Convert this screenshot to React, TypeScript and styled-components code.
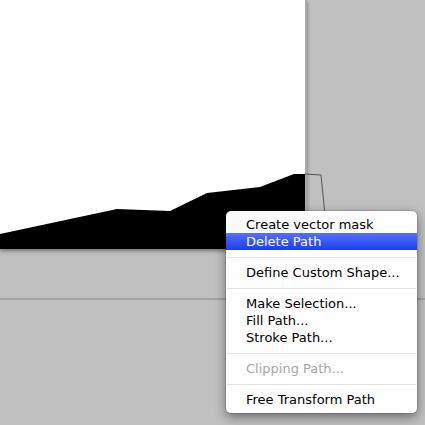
import React from "react";
import styled, { createGlobalStyle } from "styled-components";

const GlobalStyle = createGlobalStyle`
  html, body {
    margin: 0;
    padding: 0;
    background: #c0c0c0;
  }
`;

const Workspace = styled.div`
  position: relative;
  width: 425px;
  height: 425px;
  overflow: hidden;
  background: #c0c0c0;
  display: flex;
  flex-direction: column;
`;

const Canvas = styled.div`
  width: 305px;
  height: 249px;
  background: #ffffff;
  border-right: 2px solid #a8a8a8;
  box-shadow: 0 2px 4px rgba(0, 0, 0, 0.4);
  position: relative;

  svg {
    display: block;
    overflow: visible;
  }
`;

const Divider = styled.div`
  margin-top: 49px;
  height: 2px;
  width: 100%;
  background: #a2a2a2;
`;

const Menu = styled.div`
  position: absolute;
  left: 226px;
  top: 211px;
  width: 191px;
  padding: 5px 0 5px;
  background: rgba(255, 255, 255, 0.98);
  border-radius: 5px;
  box-shadow: 0 4px 12px rgba(0, 0, 0, 0.45), 0 0 0 1px rgba(0, 0, 0, 0.12);
  font-family: "DejaVu Sans", "Liberation Sans", sans-serif;
  font-size: 13px;
`;

const Item = styled.div<{ $active?: boolean; $disabled?: boolean }>`
  height: 17px;
  line-height: 17px;
  padding-left: 20px;
  white-space: nowrap;
  color: ${(p) => (p.$disabled ? "#a6a6a6" : p.$active ? "#ffffff" : "#000000")};
  background: ${(p) =>
    p.$active ? "linear-gradient(#5670f7, #1a3ef2)" : "transparent"};
`;

const Separator = styled.div`
  height: 14px;
  display: flex;
  align-items: center;
  &::after {
    content: "";
    flex: 1;
    height: 1px;
    margin: 0 1px;
    background: #e2e2e2;
  }
`;

type Entry = { label?: string; active?: boolean; disabled?: boolean; sep?: boolean };

const entries: Entry[] = [
  { label: "Create vector mask" },
  { label: "Delete Path", active: true },
  { sep: true },
  { label: "Define Custom Shape..." },
  { sep: true },
  { label: "Make Selection..." },
  { label: "Fill Path..." },
  { label: "Stroke Path..." },
  { sep: true },
  { label: "Clipping Path...", disabled: true },
  { sep: true },
  { label: "Free Transform Path" },
];

const App = () => {
  return (
    <>
      <GlobalStyle />
      <Workspace>
        <Canvas>
          <svg width="305" height="249" viewBox="0 0 305 249">
            <polygon
              points="0,234 117,209 170,211 207,193 260,187 294,174 305,174 305,249 0,249"
              fill="#000"
            />
            <polyline
              points="305,174 321,175 325,215"
              fill="none"
              stroke="#555"
              strokeWidth="1"
            />
          </svg>
        </Canvas>
        <Divider />
        <Menu>
          {entries.map((e, i) =>
            e.sep ? (
              <Separator key={i} />
            ) : (
              <Item key={i} $active={e.active} $disabled={e.disabled}>
                {e.label}
              </Item>
            )
          )}
        </Menu>
      </Workspace>
    </>
  );
};

export default App;
